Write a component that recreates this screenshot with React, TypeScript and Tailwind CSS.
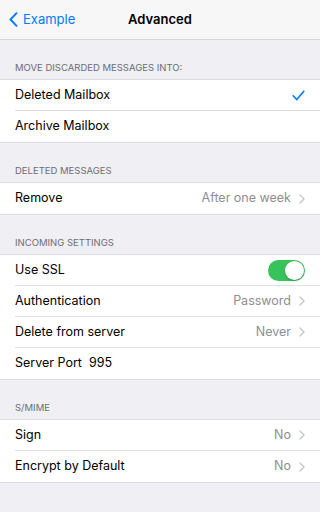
import React from 'react'

const font = { fontFamily: 'Inter, "Liberation Sans", sans-serif' }

function Chevron() {
	return (
		<svg width="6" height="10" viewBox="0 0 6 10" className="ml-[8px] shrink-0">
			<path d="M1 1l4 4-4 4" fill="none" stroke="#c4c4c9" strokeWidth="1.3" strokeLinecap="round" strokeLinejoin="round" />
		</svg>
	)
}

function Check() {
	return (
		<svg width="13" height="11" viewBox="0 0 13 11">
			<path d="M1.2 5.8l3.6 3.8L11.8 1.2" fill="none" stroke="#007aff" strokeWidth="1.6" strokeLinecap="round" strokeLinejoin="round" />
		</svg>
	)
}

function Toggle() {
	return (
		<div className="relative h-[21px] w-[37px] rounded-full bg-[#38c25a]">
			<div className="absolute right-[1px] top-[1px] h-[19px] w-[19px] rounded-full bg-white shadow-[0_1px_2px_rgba(0,0,0,0.25)]" />
		</div>
	)
}

type Row = {
	label: string
	value?: string
	chevron?: boolean
	check?: boolean
	toggle?: boolean
}

function Section({ title, rows }: { title: string; rows: Row[] }) {
	return (
		<div>
			<div className="flex h-[39px] items-end px-[15px] pb-[4px] text-[9.5px] uppercase text-[#6d6d72]">
				{title}
			</div>
			<div className="border-y border-[#dcdce0] bg-white">
				{rows.map((row, i) => (
					<div key={row.label} className="pl-[15px]">
						<div
							className={
								'flex h-[31px] items-center pr-[15px] ' +
								(i < rows.length - 1 ? 'border-b border-[#e0e0e4]' : '')
							}
						>
							<span className="flex-1 text-[12.5px] text-black">{row.label}</span>
							{row.value && <span className="text-[12.5px] text-[#8e8e93]">{row.value}</span>}
							{row.chevron && <Chevron />}
							{row.check && <Check />}
							{row.toggle && <Toggle />}
						</div>
					</div>
				))}
			</div>
		</div>
	)
}

export default function App() {
	return (
		<div className="min-h-screen w-full bg-[#efeff4]" style={font}>
			{/* nav bar */}
			<div className="grid h-10 grid-cols-3 items-center border-b border-[#d6d6da] bg-[#f7f7f7]">
				<div className="flex items-center pl-[9px] text-[13px] text-[#007aff]">
					<svg width="9" height="15" viewBox="0 0 9 15" className="mr-[5px]">
						<path d="M7.5 1.2L1.5 7.5l6 6.3" fill="none" stroke="#007aff" strokeWidth="1.9" strokeLinecap="round" strokeLinejoin="round" />
					</svg>
					Example
				</div>
				<div className="text-center text-[13px] font-semibold text-black">Advanced</div>
				<div />
			</div>

			<Section
				title="Move discarded messages into:"
				rows={[{ label: 'Deleted Mailbox', check: true }, { label: 'Archive Mailbox' }]}
			/>
			<Section title="Deleted messages" rows={[{ label: 'Remove', value: 'After one week', chevron: true }]} />
			<Section
				title="Incoming settings"
				rows={[
					{ label: 'Use SSL', toggle: true },
					{ label: 'Authentication', value: 'Password', chevron: true },
					{ label: 'Delete from server', value: 'Never', chevron: true },
					{ label: 'Server Port\u00a0\u00a0995' },
				]}
			/>
			<Section
				title="S/MIME"
				rows={[
					{ label: 'Sign', value: 'No', chevron: true },
					{ label: 'Encrypt by Default', value: 'No', chevron: true },
				]}
			/>
		</div>
	)
}
